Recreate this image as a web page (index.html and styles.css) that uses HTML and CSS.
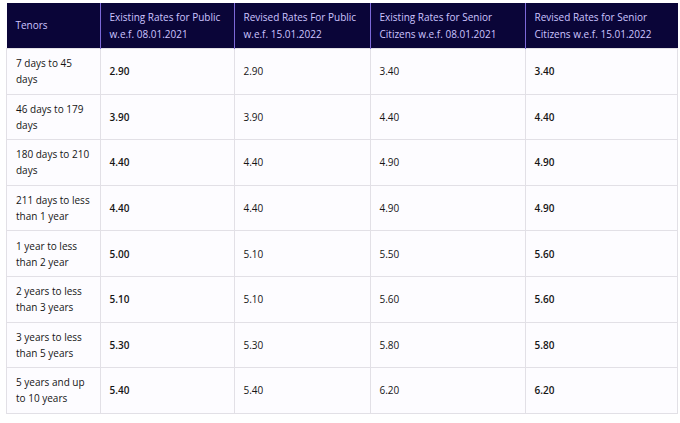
FILE: index.html
```html
<!DOCTYPE html>
<html>
<head>
<meta charset="utf-8">
<link rel="stylesheet" href="styles.css">
</head>
<body>
<table class="rates">
  <thead>
    <tr>
      <th class="c1">Tenors</th>
      <th class="c2">Existing Rates for Public<br>w.e.f. 08.01.2021</th>
      <th class="c3">Revised Rates For Public<br>w.e.f. 15.01.2022</th>
      <th class="c4">Existing Rates for Senior<br>Citizens w.e.f. 08.01.2021</th>
      <th class="c5">Revised Rates for Senior<br>Citizens w.e.f. 15.01.2022</th>
    </tr>
  </thead>
  <tbody>
    <tr><td>7 days to 45<br>days</td><td class="b">2.90</td><td>2.90</td><td>3.40</td><td class="b">3.40</td></tr>
    <tr><td>46 days to 179<br>days</td><td class="b">3.90</td><td>3.90</td><td>4.40</td><td class="b">4.40</td></tr>
    <tr><td>180 days to 210<br>days</td><td class="b">4.40</td><td>4.40</td><td>4.90</td><td class="b">4.90</td></tr>
    <tr><td>211 days to less<br>than 1 year</td><td class="b">4.40</td><td>4.40</td><td>4.90</td><td class="b">4.90</td></tr>
    <tr><td>1 year to less<br>than 2 year</td><td class="b">5.00</td><td>5.10</td><td>5.50</td><td class="b">5.60</td></tr>
    <tr><td>2 years to less<br>than 3 years</td><td class="b">5.10</td><td>5.10</td><td>5.60</td><td class="b">5.60</td></tr>
    <tr><td>3 years to less<br>than 5 years</td><td class="b">5.30</td><td>5.30</td><td>5.80</td><td class="b">5.80</td></tr>
    <tr><td>5 years and up<br>to 10 years</td><td class="b">5.40</td><td>5.40</td><td>6.20</td><td class="b">6.20</td></tr>
  </tbody>
</table>
</body>
</html>
```

FILE: styles.css
```css
html, body {
  margin: 0;
  padding: 0;
  background: #ffffff;
}
body {
  padding: 3px 4px 0 6px;
  font-family: "Open Sans", "Noto Sans", sans-serif;
  font-size: 10px;
}
.rates {
  border-collapse: collapse;
  table-layout: fixed;
  width: 669px;
  background: #fdfcff;
}
.rates th {
  background: #0a0538;
  color: #cdc4ff;
  font-weight: 400;
  text-align: left;
  height: 45px;
  padding: 0 0 0 9px;
  line-height: 17px;
  border-left: 1px solid #7c68d8;
  vertical-align: middle;
}
.rates th.c1 { border-left: none; width: 84px; }
.rates th.c2 { width: 124px; }
.rates th.c3 { width: 126px; }
.rates th.c4 { width: 145px; }
.rates th.c5 { width: 143px; }
.rates td {
  height: 44.6px;
  padding: 0 0 0 9px;
  color: #151515;
  line-height: 16px;
  border: 1px solid #e2e0e6;
  vertical-align: middle;
}
.rates td.b {
  font-weight: 600;
}
```
